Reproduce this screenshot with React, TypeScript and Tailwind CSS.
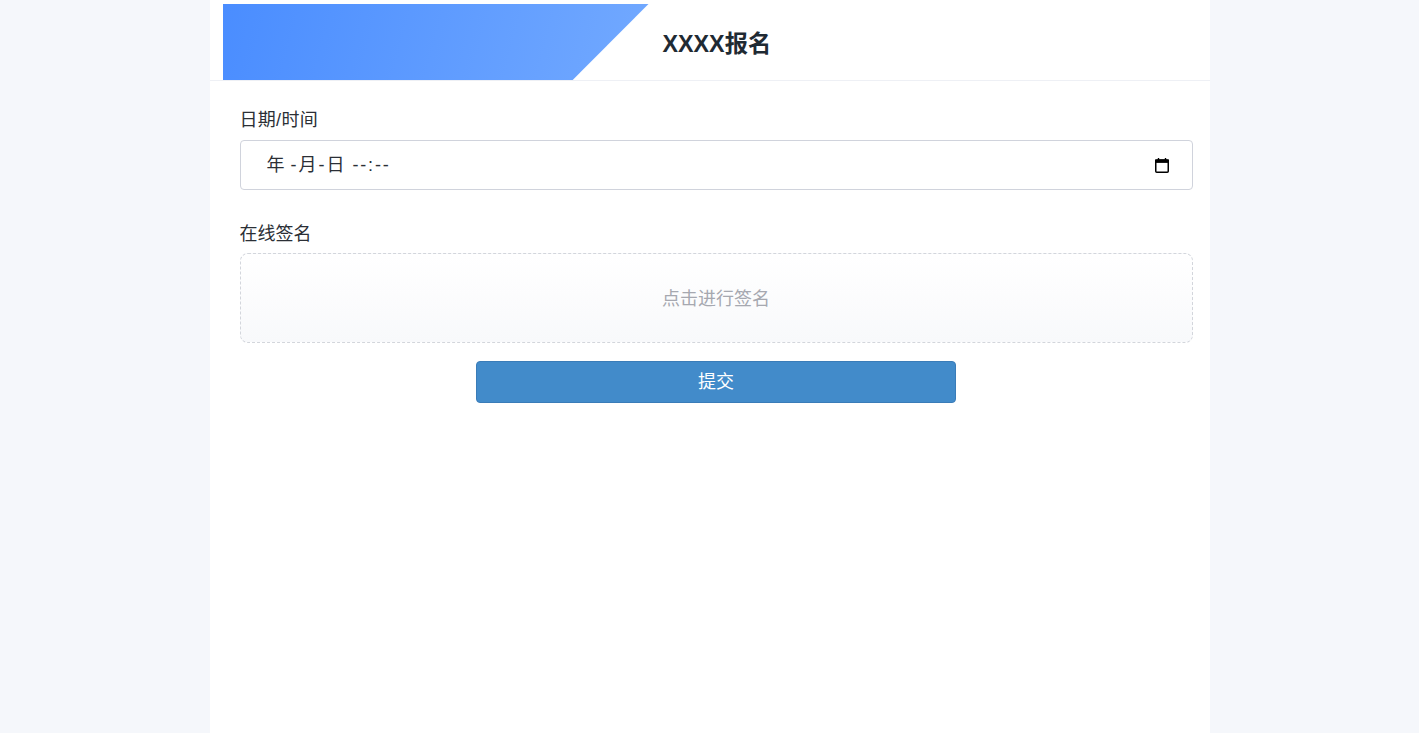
const font = "font-['Liberation_Sans','Noto_Sans_CJK_SC',sans-serif]"

function CalendarIcon() {
  return (
    <svg width="14" height="15" viewBox="0 0 14 15" className="block">
      <rect x="0.75" y="2" width="12.5" height="12.25" rx="1" fill="none" stroke="#000" strokeWidth="1.5" />
      <rect x="0" y="1.5" width="14" height="3.4" fill="#000" />
      <rect x="2.8" y="0" width="1.4" height="2" fill="#000" />
      <rect x="9.8" y="0" width="1.4" height="2" fill="#000" />
    </svg>
  )
}

export default function App() {
  return (
    <div className={`min-h-screen bg-[#f5f7fb] ${font}`}>
      <div className="mx-auto min-h-screen w-[1000px] bg-white">
        <header className="flex h-[81px] items-end border-b border-[#eef0f5]">
          <div className="ml-[13px] h-[76px] w-[426px] bg-[linear-gradient(105deg,#4a8dff,#72a9ff)] [clip-path:polygon(0_0,100%_0,82.2%_100%,0_100%)]" />
          <h1 className="h-[76px] pl-[14px] text-[23.3px] leading-[80px] font-bold text-[#1f2a33]">XXXX报名</h1>
        </header>
        <form className="pt-[26px] pr-[17px] pl-[30px]">
          <label className="block text-[18px] leading-[27px] tracking-[0.3px] text-[#2b2f36]">日期/时间</label>
          <div className="mt-[6px] flex h-[50px] items-center justify-between rounded border border-[#d0d3dc] pr-[23px] pl-[26px]">
            <span className="flex text-[18px] text-[#2b2f36]">
              <span>年</span>
              <span className="ml-[6px]">-</span>
              <span className="ml-[2px]">月</span>
              <span className="ml-[2px]">-</span>
              <span className="ml-[2px]">日</span>
              <span className="ml-[8px] tracking-[1.8px]">--:--</span>
            </span>
            <CalendarIcon />
          </div>
          <label className="mt-[31px] block text-[18px] leading-[27px] text-[#2b2f36]">在线签名</label>
          <div className="mt-[5px] flex h-[90px] items-center justify-center rounded-lg border border-dashed border-[#d3d6dc] bg-gradient-to-b from-white to-[#f8f9fb] pt-[2px] text-[18px] text-[#a6a8b0]">
            点击进行签名
          </div>
          <div className="mt-[18px] flex justify-center">
            <button type="button" className="h-[42px] w-[480px] rounded border border-[#3a7cb8] bg-[#428bca] pt-[1px] text-[18px] text-white">
              提交
            </button>
          </div>
        </form>
      </div>
    </div>
  )
}
